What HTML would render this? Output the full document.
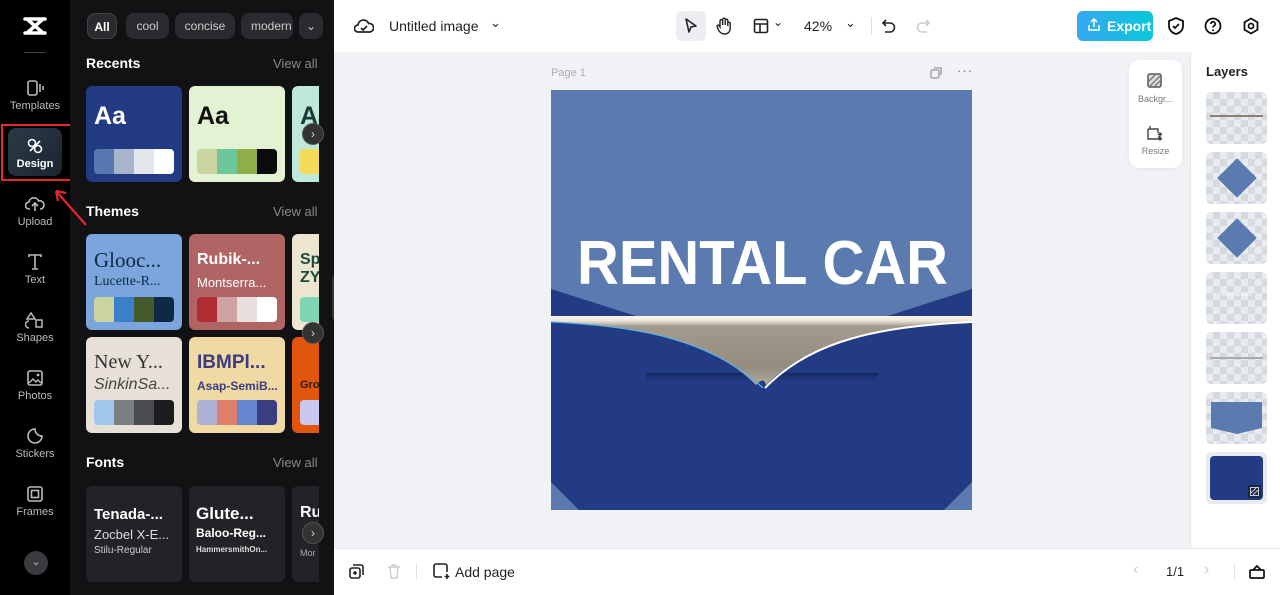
<!DOCTYPE html>
<html><head><meta charset="utf-8"><style>
*{box-sizing:border-box;margin:0;padding:0}
body{width:1280px;height:595px;overflow:hidden;font-family:"Liberation Sans",sans-serif;background:#f0f2f5;position:relative}
.rail{position:absolute;left:0;top:0;width:70px;height:595px;background:#000}
.panel{position:absolute;left:70px;top:0;width:264px;height:595px;background:#121214;overflow:hidden}
.ri{position:absolute;left:0;width:70px;text-align:center;color:#bbb;font-size:11px}
.ri svg{display:block;margin:0 auto 3px}
.chip{position:absolute;top:13px;height:26px;border-radius:8px;background:#2a2b2e;color:#ccc;font-size:12px;line-height:26px;text-align:center}
.h{position:absolute;left:16px;color:#fff;font-weight:bold;font-size:14px}
.va{position:absolute;left:203px;color:#888;font-size:13px}
.card{position:absolute;width:96px;height:96px;border-radius:6px;overflow:hidden}
.c3{width:27px;border-radius:6px 0 0 6px}
.sw{position:absolute;left:8px;bottom:8px;width:80px;height:25px;border-radius:4px;overflow:hidden;display:flex}
.sw i{flex:1}
.arr{position:absolute;left:232px;width:22px;height:22px;border-radius:50%;background:#333;border:1px solid #555;color:#ddd;font-size:12px;text-align:center;line-height:20px}
.top{position:absolute;left:334px;top:0;width:946px;height:52px;background:#fff}
.bot{position:absolute;left:334px;top:548px;width:946px;height:47px;background:#fff;border-top:1px solid #e6e8eb}
.layers{position:absolute;left:1190px;top:52px;width:90px;height:496px;background:#fff;border-left:1px solid #e8e8e8}
.ly{position:absolute;left:15px;width:61px;height:52px;border-radius:5px;background-color:#e8ecf0;background-image:linear-gradient(45deg,#d6d9dd 25%,transparent 25%,transparent 75%,#d6d9dd 75%),linear-gradient(45deg,#d6d9dd 25%,transparent 25%,transparent 75%,#d6d9dd 75%);background-size:14px 14px;background-position:0 0,7px 7px;overflow:hidden}
</style></head><body>

<div class="rail">
  <svg style="position:absolute;left:23px;top:16px" width="24" height="20" viewBox="0 0 24 20"><path d="M2 3h20M2 17h20M4 3l16 14M20 3L4 17" stroke="#fff" stroke-width="3.5" fill="none" stroke-linecap="round"/></svg>
  <div style="position:absolute;left:24px;top:52px;width:22px;height:1px;background:#444"></div>
  <div class="ri" style="top:79px"><svg width="20" height="18" viewBox="0 0 20 18"><rect x="3" y="2" width="9" height="14" rx="2" fill="none" stroke="#bbb" stroke-width="1.6"/><path d="M15 5v8M18 7v4" stroke="#bbb" stroke-width="1.6"/></svg>Templates</div>
  <div style="position:absolute;left:8px;top:128px;width:54px;height:48px;border-radius:8px;background:linear-gradient(135deg,#2a3a48,#1c2430)"></div>
  <div style="position:absolute;left:1px;top:124px;width:71px;height:57px;border:2px solid #e5282a"></div>
  <div class="ri" style="top:137px;color:#fff;font-weight:bold"><svg width="18" height="18" viewBox="0 0 18 18"><circle cx="6" cy="6" r="3.5" fill="none" stroke="#fff" stroke-width="1.6"/><circle cx="12" cy="12" r="3.5" fill="none" stroke="#fff" stroke-width="1.6"/><path d="M4 14L14 4" stroke="#fff" stroke-width="1.6"/></svg>Design</div>
  <div class="ri" style="top:195px"><svg width="20" height="18" viewBox="0 0 20 18"><path d="M5 14H4a3.5 3.5 0 010-7 5 5 0 019.6-1A4 4 0 0116 14h-1M10 16V8M7 11l3-3 3 3" stroke="#bbb" stroke-width="1.6" fill="none"/></svg>Upload</div>
  <div class="ri" style="top:253px"><svg width="18" height="18" viewBox="0 0 18 18"><path d="M3 4V2h12v2M9 2v14M6 16h6" stroke="#bbb" stroke-width="1.6" fill="none"/></svg>Text</div>
  <div class="ri" style="top:311px"><svg width="20" height="18" viewBox="0 0 20 18"><path d="M6 2l-4 6h8zM11 9h6v7h-6zM4 10a3.5 3.5 0 100 7" stroke="#bbb" stroke-width="1.5" fill="none"/></svg>Shapes</div>
  <div class="ri" style="top:369px"><svg width="18" height="18" viewBox="0 0 18 18"><rect x="2" y="2" width="14" height="14" rx="2" fill="none" stroke="#bbb" stroke-width="1.6"/><path d="M3 14l4-4 3 3 2-2 3 3" stroke="#bbb" stroke-width="1.4" fill="none"/><circle cx="12" cy="6" r="1.4" fill="#bbb"/></svg>Photos</div>
  <div class="ri" style="top:427px"><svg width="18" height="18" viewBox="0 0 18 18"><path d="M9 2a7 7 0 107 7c-4 0-7-3-7-7z" stroke="#bbb" stroke-width="1.6" fill="none"/></svg>Stickers</div>
  <div class="ri" style="top:485px"><svg width="18" height="18" viewBox="0 0 18 18"><rect x="2" y="2" width="14" height="14" rx="2" fill="none" stroke="#bbb" stroke-width="1.6"/><rect x="5.5" y="5.5" width="7" height="7" fill="none" stroke="#bbb" stroke-width="1.6"/></svg>Frames</div>
  <div style="position:absolute;left:24px;top:551px;width:24px;height:24px;border-radius:50%;background:#3a3b3e;color:#bbb;text-align:center;line-height:22px;font-size:11px">⌄</div>
</div>

<div class="panel">
  <div class="chip" style="left:17px;width:30px;border:1px solid #444;color:#fff;font-weight:bold">All</div>
  <div class="chip" style="left:56px;width:43px">cool</div>
  <div class="chip" style="left:105px;width:60px">concise</div>
  <div class="chip" style="left:171px;width:52px;text-align:left;padding-left:10px;overflow:hidden">modern</div>
  <div class="chip" style="left:229px;width:24px">⌄</div>

  <div class="h" style="top:55px">Recents</div><div class="va" style="top:56px">View all</div>
  <div class="card" style="left:16px;top:86px;background:#233b84"><div style="position:absolute;left:8px;top:16px;color:#fff;font-weight:bold;font-size:25px">Aa</div><div class="sw"><i style="background:#5977b0"></i><i style="background:#a7b5cb"></i><i style="background:#e4e7eb"></i><i style="background:#fff"></i></div></div>
  <div class="card" style="left:119px;top:86px;background:#e3f2d3"><div style="position:absolute;left:8px;top:16px;color:#111;font-weight:bold;font-size:25px">Aa</div><div class="sw"><i style="background:#c9d49f"></i><i style="background:#6dc79b"></i><i style="background:#8fae4a"></i><i style="background:#0b0b0b"></i></div></div>
  <div class="card c3" style="left:222px;top:86px;background:#bfe8d8"><div style="position:absolute;left:8px;top:16px;color:#1b3a3a;font-weight:bold;font-size:25px">Aa</div><div class="sw"><i style="background:#f2dc5a"></i></div></div>
  <div class="arr" style="top:123px">›</div>

  <div class="h" style="top:203px">Themes</div><div class="va" style="top:204px">View all</div>
  <div class="card" style="left:16px;top:234px;background:#7ba5dc"><div style="position:absolute;left:8px;top:14px;color:#0e2a45;font-family:'Liberation Serif',serif;font-size:21px">Glooc...</div><div style="position:absolute;left:8px;top:40px;color:#0e2a45;font-family:'Liberation Serif',serif;font-size:14px">Lucette-R...</div><div class="sw"><i style="background:#c9d49f"></i><i style="background:#3a80c8"></i><i style="background:#455a2a"></i><i style="background:#0c2a45"></i></div></div>
  <div class="card" style="left:119px;top:234px;background:#b06464"><div style="position:absolute;left:8px;top:17px;color:#fff;font-weight:bold;font-size:16px">Rubik-...</div><div style="position:absolute;left:8px;top:41px;color:#fff;font-size:13px">Montserra...</div><div class="sw"><i style="background:#b22d33"></i><i style="background:#d0a3a3"></i><i style="background:#e9dfdf"></i><i style="background:#fff"></i></div></div>
  <div class="card c3" style="left:222px;top:234px;background:#ece5cf"><div style="position:absolute;left:8px;top:17px;color:#1b4a3a;font-weight:bold;font-size:16px">Sp<br>ZY</div><div class="sw"><i style="background:#7fd4b4"></i></div></div>
  <div class="card" style="left:16px;top:337px;background:#e6e0d7"><div style="position:absolute;left:8px;top:14px;color:#333;font-family:'Liberation Serif',serif;font-size:20px">New Y...</div><div style="position:absolute;left:8px;top:39px;color:#444;font-style:italic;font-size:16px">SinkinSa...</div><div class="sw"><i style="background:#a0c6ee"></i><i style="background:#7c7f82"></i><i style="background:#4a4c50"></i><i style="background:#1a1c20"></i></div></div>
  <div class="card" style="left:119px;top:337px;background:#f0d9a2"><div style="position:absolute;left:8px;top:15px;color:#3b3d82;font-weight:bold;font-size:19px">IBMPl...</div><div style="position:absolute;left:8px;top:42px;color:#3b3d82;font-weight:bold;font-size:12px">Asap-SemiB...</div><div class="sw"><i style="background:#aeb3d6"></i><i style="background:#e07e6c"></i><i style="background:#6585d1"></i><i style="background:#3b3d82"></i></div></div>
  <div class="card c3" style="left:222px;top:337px;background:#e2550f"><div style="position:absolute;left:8px;top:42px;color:#222;font-weight:bold;font-size:11px">Gro</div><div class="sw"><i style="background:#c9c9f0"></i></div></div>
  <div class="arr" style="top:322px">›</div>

  <div class="h" style="top:454px">Fonts</div><div class="va" style="top:455px">View all</div>
  <div class="card" style="left:16px;top:486px;background:#222326"><div style="position:absolute;left:8px;top:20px;color:#fff;font-weight:bold;font-size:15px">Tenada-...</div><div style="position:absolute;left:8px;top:41px;color:#ddd;font-size:13px">Zocbel X-E...</div><div style="position:absolute;left:8px;top:59px;color:#ccc;font-size:10px">Stilu-Regular</div></div>
  <div class="card" style="left:119px;top:486px;background:#222326"><div style="position:absolute;left:7px;top:18px;color:#fff;font-weight:bold;font-size:17px">Glute...</div><div style="position:absolute;left:7px;top:40px;color:#fff;font-weight:bold;font-size:12px">Baloo-Reg...</div><div style="position:absolute;left:7px;top:59px;color:#ddd;font-size:8px;font-weight:bold">HammersmithOn...</div></div>
  <div class="card c3" style="left:222px;top:486px;background:#222326"><div style="position:absolute;left:8px;top:18px;color:#fff;font-weight:bold;font-size:16px">Ru</div><div style="position:absolute;left:8px;top:62px;color:#aaa;font-size:9px">Mor</div></div>
  <div class="arr" style="top:522px">›</div>
  <div style="position:absolute;left:262px;top:276px;width:8px;height:44px;background:#333;border-radius:3px"></div>
</div>

<svg style="position:absolute;left:50px;top:183px;z-index:5" width="40" height="45" viewBox="0 0 40 45"><path d="M36 42L6 8M6 8l2 10M6 8l10 2" stroke="#e5282a" stroke-width="2.2" fill="none"/></svg>

<div class="top">
  <svg style="position:absolute;left:20px;top:17px" width="20" height="18" viewBox="0 0 20 18"><path d="M5 15H4a3.5 3.5 0 010-7 5.5 5.5 0 0110.6-1.5A4 4 0 0116 15zM7 11l2 2 4-4" stroke="#222" stroke-width="1.7" fill="none"/></svg>
  <div style="position:absolute;left:55px;top:18px;font-size:14px;color:#222">Untitled image</div>
  <div style="position:absolute;left:156px;top:15px;font-size:13px;color:#222">⌄</div>
  <div style="position:absolute;left:342px;top:11px;width:30px;height:30px;border-radius:6px;background:#eceef1"></div>
  <svg style="position:absolute;left:350px;top:18px" width="14" height="16" viewBox="0 0 14 16"><path d="M2 1l10 7-5 1-2 5z" stroke="#222" stroke-width="1.6" fill="none" stroke-linejoin="round"/></svg>
  <svg style="position:absolute;left:382px;top:17px" width="16" height="18" viewBox="0 0 16 18"><path d="M4 10V4a1.3 1.3 0 012.6 0v4V2.5a1.3 1.3 0 012.6 0V8 3.5a1.3 1.3 0 012.6 0V9 6a1.3 1.3 0 012.4 0v5c0 4-2.5 6-5.5 6S3 15 2 12l-1-3a1.2 1.2 0 012-.5z" stroke="#222" stroke-width="1.4" fill="none"/></svg>
  <svg style="position:absolute;left:419px;top:18px" width="16" height="16" viewBox="0 0 16 16"><rect x="1.5" y="1.5" width="13" height="13" rx="1.5" stroke="#222" stroke-width="1.6" fill="none"/><path d="M1.5 6h13M7 6v8.5" stroke="#222" stroke-width="1.6"/></svg>
  <div style="position:absolute;left:439px;top:15px;font-size:12px;color:#222">⌄</div>
  <div style="position:absolute;left:470px;top:18px;font-size:14px;color:#222">42%</div>
  <div style="position:absolute;left:511px;top:15px;font-size:13px;color:#222">⌄</div>
  <div style="position:absolute;left:537px;top:17px;width:1px;height:18px;background:#ddd"></div>
  <svg style="position:absolute;left:548px;top:18px" width="14" height="16" viewBox="0 0 14 16"><path d="M4 2L1 5l3 3M1 5h7a4.5 4.5 0 010 9H3" stroke="#222" stroke-width="1.6" fill="none"/></svg>
  <svg style="position:absolute;left:582px;top:18px" width="14" height="16" viewBox="0 0 14 16"><path d="M10 2l3 3-3 3M13 5H6a4.5 4.5 0 000 9h5" stroke="#ccc" stroke-width="1.6" fill="none"/></svg>
  <div style="position:absolute;left:743px;top:11px;width:76px;height:30px;border-radius:6px;background:linear-gradient(90deg,#36a7f0,#09c8da);color:#fff;font-weight:bold;font-size:14px;line-height:30px;padding-left:30px">Export</div>
  <svg style="position:absolute;left:753px;top:18px" width="14" height="14" viewBox="0 0 14 14"><path d="M7 9V1M4 4l3-3 3 3M2 7v5h10V7" stroke="#fff" stroke-width="1.5" fill="none"/></svg>
  <svg style="position:absolute;left:833px;top:16px" width="18" height="20" viewBox="0 0 18 20"><path d="M9 2l7 3v5c0 4-3 7-7 8-4-1-7-4-7-8V5zM6 10l2 2 4-4" stroke="#111" stroke-width="1.8" fill="none"/></svg>
  <svg style="position:absolute;left:870px;top:17px" width="18" height="18" viewBox="0 0 18 18"><circle cx="9" cy="9" r="7.5" stroke="#111" stroke-width="1.8" fill="none"/><path d="M6.8 7a2.2 2.2 0 114 1.2c-1 .7-1.8 1-1.8 2.3" stroke="#111" stroke-width="1.7" fill="none"/><circle cx="9" cy="13.3" r="1" fill="#111"/></svg>
  <svg style="position:absolute;left:908px;top:17px" width="18" height="18" viewBox="0 0 18 18"><path d="M9 1.5l6.5 3.75v7.5L9 16.5l-6.5-3.75v-7.5z" stroke="#111" stroke-width="1.8" fill="none"/><circle cx="9" cy="9" r="2.5" stroke="#111" stroke-width="1.8" fill="none"/></svg>
</div>

<div style="position:absolute;left:551px;top:67px;font-size:11px;color:#aab">Page 1</div>
<svg style="position:absolute;left:930px;top:67px" width="13" height="12" viewBox="0 0 13 12"><rect x="1" y="3" width="8" height="8" rx="1.5" stroke="#999" stroke-width="1.3" fill="none"/><path d="M4 1h7v7" stroke="#999" stroke-width="1.3" fill="none"/></svg>
<div style="position:absolute;left:957px;top:63px;font-size:13px;color:#777;letter-spacing:1px">···</div>

<svg style="position:absolute;left:551px;top:90px" width="421" height="420" viewBox="0 0 421 420">
  <defs>
    <linearGradient id="ch" gradientUnits="userSpaceOnUse" x1="0" y1="226" x2="0" y2="300"><stop offset="0" stop-color="#fbf6ea"/><stop offset=".06" stop-color="#efe9dd"/><stop offset=".14" stop-color="#a39a8d"/><stop offset=".7" stop-color="#958c80"/><stop offset="1" stop-color="#bdb6ab"/></linearGradient>
    <linearGradient id="sh" x1="0" y1="0" x2="0" y2="1"><stop offset="0" stop-color="#0f1f50" stop-opacity=".8"/><stop offset="1" stop-color="#233b84" stop-opacity="0"/></linearGradient>
  </defs>
  <rect width="421" height="420" fill="#233b84"/>
  <rect width="421" height="226" fill="#5a7ab0"/>
  <path d="M0 199L85 226H0z" fill="#233b84"/>
  <path d="M421 199L337 226H421z" fill="#233b84"/>
  <rect x="95" y="283" width="232" height="10" fill="url(#sh)"/>
  <path d="M0 226H421V232C330 236 260 250 215 295 213 288 210 290 205 295 160 250 90 236 0 232z" fill="url(#ch)"/>
  <path d="M0 232C90 236 160 250 212 298" stroke="#5bb0e0" stroke-width="1.2" fill="none"/>
  <path d="M421 232C330 236 260 250 214 298" stroke="#fff" stroke-width="2" fill="none"/>
  <path d="M0 392L28 420H0zM421 392L393 420H421z" fill="#5a7ab0"/>
  <text x="26" y="194" textLength="371" lengthAdjust="spacingAndGlyphs" font-family="Liberation Sans" font-weight="bold" font-size="62" fill="#fff">RENTAL CAR</text>
</svg>

<div style="position:absolute;left:1129px;top:60px;width:53px;height:108px;border-radius:10px;background:#fff;box-shadow:0 1px 4px rgba(0,0,0,.06)"></div>
<svg style="position:absolute;left:1147px;top:73px" width="15" height="15" viewBox="0 0 15 15"><rect x="1" y="1" width="13" height="13" rx="2" stroke="#555" stroke-width="1.5" fill="#ddd"/><path d="M1 9l8-8M3 13l10-10M7 14l7-7" stroke="#777" stroke-width="1.3"/></svg>
<div style="position:absolute;left:1129px;top:94px;width:53px;text-align:center;font-size:9px;color:#777">Backgr...</div>
<svg style="position:absolute;left:1147px;top:125px" width="16" height="16" viewBox="0 0 16 16"><path d="M3 1v3M1 4h10v4M4 14h8v-3M13 8v7M11 10l2-2 2 2M11 13l2 2 2-2M1 4v10h3" stroke="#444" stroke-width="1.4" fill="none"/></svg>
<div style="position:absolute;left:1129px;top:146px;width:53px;text-align:center;font-size:9px;color:#777">Resize</div>

<div class="layers">
  <div style="position:absolute;left:15px;top:12px;font-size:13px;font-weight:bold;color:#222">Layers</div>
  <div class="ly" style="top:40px"><div style="position:absolute;left:4px;top:23px;width:53px;height:2px;background:#8a8278"></div></div>
  <div class="ly" style="top:100px"><div style="position:absolute;left:17px;top:12px;width:28px;height:28px;background:#5a7ab0;transform:rotate(45deg)"></div></div>
  <div class="ly" style="top:160px"><div style="position:absolute;left:17px;top:12px;width:28px;height:28px;background:#5a7ab0;transform:rotate(45deg)"></div></div>
  <div class="ly" style="top:220px"><div style="position:absolute;left:0;top:20px;width:61px;text-align:center;font-size:5px;color:#fff">RENTAL CAR</div></div>
  <div class="ly" style="top:280px"><div style="position:absolute;left:4px;top:25px;width:53px;height:2px;background:#aaa"></div></div>
  <div class="ly" style="top:340px"><svg width="61" height="52"><path d="M5 10H56V36L31 42 5 36z" fill="#5a7ab0"/></svg></div>
  <div class="ly" style="top:400px;background:#e8ecf0"><div style="position:absolute;left:4px;top:4px;width:53px;height:44px;border-radius:4px;background:#233b84"></div><div style="position:absolute;left:42px;top:33px;width:13px;height:13px;background:#1a2540;border-radius:2px"></div><svg style="position:absolute;left:44px;top:35px" width="9" height="9"><rect x=".5" y=".5" width="8" height="8" stroke="#ccd" fill="none"/><path d="M1 6l5-5M3 8l5-5" stroke="#ccd"/></svg></div>
</div>

<div class="bot">
  <svg style="position:absolute;left:15px;top:15px" width="15" height="15" viewBox="0 0 15 15"><rect x="1" y="4" width="10" height="10" rx="2" stroke="#222" stroke-width="1.6" fill="none"/><path d="M4 1h8a2 2 0 012 2v8M6 7v4M4 9h4" stroke="#222" stroke-width="1.6" fill="none"/></svg>
  <svg style="position:absolute;left:53px;top:15px" width="14" height="15" viewBox="0 0 14 15"><path d="M1 3h12M5 3V1h4v2M3 3l1 11h6l1-11" stroke="#ccc" stroke-width="1.4" fill="none"/></svg>
  <div style="position:absolute;left:82px;top:14px;width:1px;height:16px;background:#e0e0e0"></div>
  <svg style="position:absolute;left:99px;top:14px" width="17" height="17" viewBox="0 0 17 17"><path d="M9 14H3a2 2 0 01-2-2V3a2 2 0 012-2h9a2 2 0 012 2v6M14 11v5M11.5 13.5h5" stroke="#222" stroke-width="1.6" fill="none"/></svg>
  <div style="position:absolute;left:121px;top:15px;font-size:14px;color:#222">Add page</div>
  <div style="position:absolute;left:799px;top:12px;font-size:16px;color:#ccc">‹</div>
  <div style="position:absolute;left:832px;top:15px;font-size:13px;color:#222">1/1</div>
  <div style="position:absolute;left:870px;top:12px;font-size:16px;color:#ccc">›</div>
  <div style="position:absolute;left:900px;top:14px;width:1px;height:16px;background:#e0e0e0"></div>
  <svg style="position:absolute;left:914px;top:14px" width="18" height="17" viewBox="0 0 18 17"><rect x="2" y="7" width="14" height="8" rx="1" stroke="#111" stroke-width="1.7" fill="none"/><path d="M5 7l4-4 4 4" stroke="#111" stroke-width="1.7" fill="none"/></svg>
</div>
</body></html>
